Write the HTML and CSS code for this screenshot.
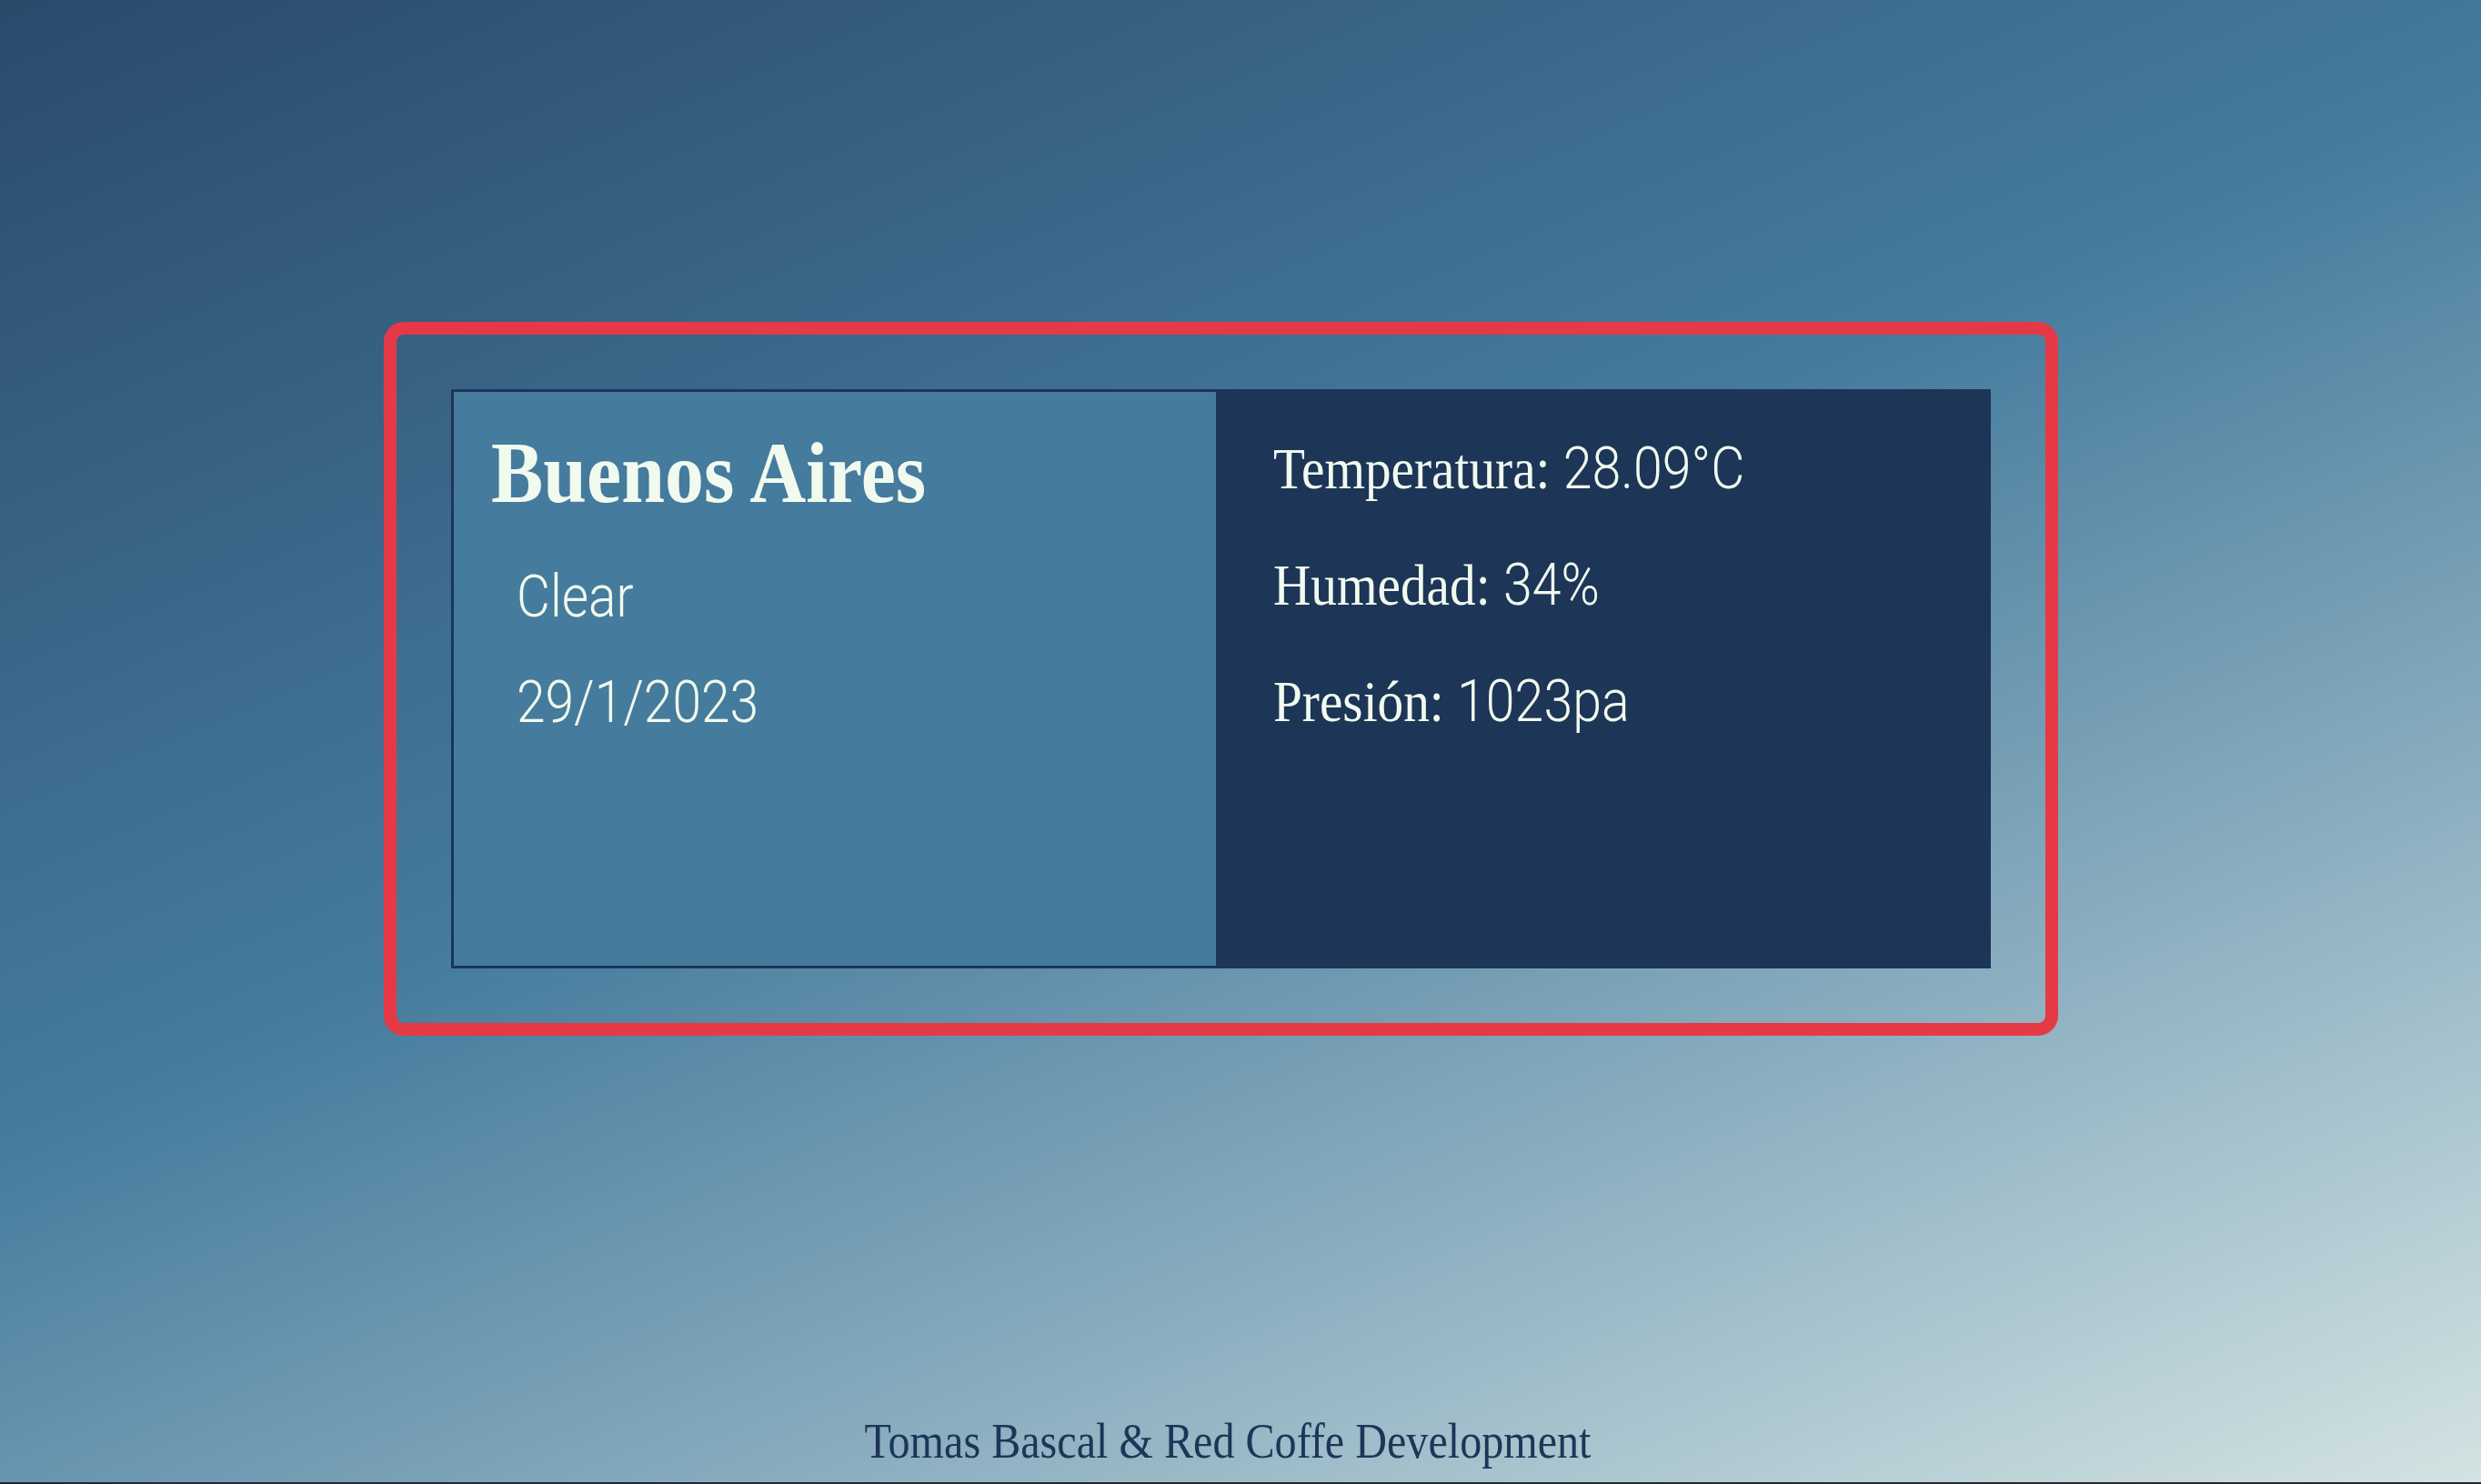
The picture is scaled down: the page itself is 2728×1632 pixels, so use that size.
FILE: index.html
```html
<!DOCTYPE html>
<html lang="es">
<head>
<meta charset="utf-8">
<title>Clima</title>
<link rel="stylesheet" href="styles.css">
</head>
<body>
<main class="page">
  <section class="frame">
    <div class="card">
      <div class="card-left">
        <h1 class="city">Buenos Aires</h1>
        <p class="info">Clear</p>
        <p class="info">29/1/2023</p>
      </div>
      <div class="card-right">
        <p class="stat">Temperatura: <span class="val">28.09°C</span></p>
        <p class="stat">Humedad: <span class="val">34%</span></p>
        <p class="stat">Presión: <span class="val">1023pa</span></p>
      </div>
    </div>
  </section>
  <footer class="credits"><p class="credits-text">Tomas Bascal &amp; Red Coffe Development</p></footer>
</main>
<div class="bottom-bar"></div>
</body>
</html>
```
FILE: styles.css
```css
* { box-sizing: border-box; }

html, body {
  margin: 0;
  padding: 0;
  background: #25272f;
}

.page {
  height: 1630px;
  display: flex;
  flex-direction: column;
  overflow: hidden;
  background: linear-gradient(157deg, #2a4a6c 0%, #457b9d 45%, #d3e3e3 100%);
}

.frame {
  margin: 354px 0 0 422px;
  width: 1841px;
  height: 785px;
  border: 14px solid #e63946;
  border-radius: 22px;
  padding: 60px;
}

.card {
  display: grid;
  grid-template-columns: 844px 1fr;
  height: 100%;
}

.card-left {
  background: #457b9d;
  border: 3px solid #1d3557;
  padding: 41px 0 0 41px;
}

.card-right {
  background: #1d3557;
  padding: 24px 0 0 60px;
}

.city {
  margin: 0 0 49px;
  font: 700 96px/96px "Liberation Serif", "Times New Roman", serif;
  color: #f1faee;
  white-space: nowrap;
  transform: scaleX(0.895);
  transform-origin: left center;
}

.info {
  margin: 0 0 38px 28px;
  font: 300 65px/78px Roboto, "Liberation Sans", sans-serif;
  color: #f1faee;
  white-space: nowrap;
  transform: scaleX(0.875);
  transform-origin: left center;
}

.stat {
  margin: 0;
  font: 400 64px/128px "Liberation Serif", "Times New Roman", serif;
  color: #f1faee;
  white-space: nowrap;
  transform: scaleX(0.895);
  transform-origin: left center;
}

.val {
  font-family: Roboto, "Liberation Sans", sans-serif;
  font-weight: 300;
}

.credits {
  margin-top: 414px;
  padding-right: 28px;
  text-align: center;
}

.credits-text {
  margin: 0;
  font: 400 55px/64px "Liberation Serif", "Times New Roman", serif;
  color: #1d3557;
  white-space: nowrap;
  transform: scaleX(0.875);
  transform-origin: center center;
}

.bottom-bar {
  height: 40px;
  background: #25272f;
}
```
